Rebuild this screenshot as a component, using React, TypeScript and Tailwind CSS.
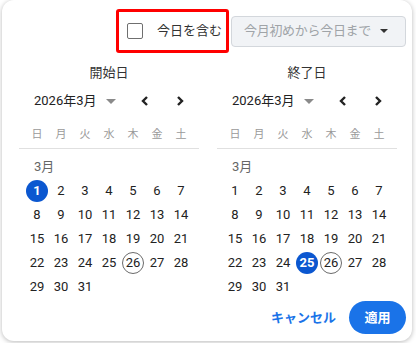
const WEEKDAYS = ["日", "月", "火", "水", "木", "金", "土"];
const TODAY = 26;

function Chevron({ dir }: { dir: "left" | "right" }) {
  return (
    <svg width="10" height="12" viewBox="0 0 10 12" fill="none">
      <path
        d={dir === "left" ? "M7 2 L3 6 L7 10" : "M3 2 L7 6 L3 10"}
        stroke="#222"
        strokeWidth="2.4"
        strokeLinejoin="miter"
      />
    </svg>
  );
}

function Calendar({ title, selected }: { title: string; selected: number }) {
  const days = Array.from({ length: 31 }, (_, i) => i + 1);

  return (
    <div className="w-[180px] flex flex-col">
      <div className="h-[20px] flex items-center justify-center text-[13px] text-[#333]">
        {title}
      </div>
      <div className="mt-[4px] h-[28px] flex items-center pl-[15px] pr-[5px]">
        <div className="flex-1 flex items-center whitespace-nowrap">
          <span className="text-[13px] text-[#222]">2026年3月</span>
          <svg className="ml-[9px]" width="10" height="5" viewBox="0 0 10 5">
            <path d="M0 0 L10 0 L5 5 Z" fill="#8a8a8a" />
          </svg>
        </div>
        <div className="flex gap-[7px]">
          <button className="w-[28px] h-[28px] flex items-center justify-center">
            <Chevron dir="left" />
          </button>
          <button className="w-[28px] h-[28px] flex items-center justify-center">
            <Chevron dir="right" />
          </button>
        </div>
      </div>
      <div className="mt-[9px] h-[25px] grid grid-cols-7 px-[6px] border-b border-[#e0e0e0]">
        {WEEKDAYS.map((w) => (
          <div key={w} className="flex items-center justify-center text-[11px] text-[#9a9a9a] pb-[2px]">
            {w}
          </div>
        ))}
      </div>
      <div className="mt-[6px] h-[24px] flex items-center pl-[15px] text-[13px] text-[#666]">
        3月
      </div>
      <div className="grid grid-cols-7 px-[6px]">
        {days.map((d) => (
          <div key={d} className="h-[24px] flex items-center justify-center">
            {d === selected ? (
              <span className="w-[22px] h-[22px] rounded-full bg-[#0b57d0] text-white font-bold text-[13px] flex items-center justify-center">
                {d}
              </span>
            ) : d === TODAY ? (
              <span className="w-[22px] h-[22px] rounded-full border border-[#6b6b6b] text-[#222] text-[13px] flex items-center justify-center">
                {d}
              </span>
            ) : (
              <span className="text-[13px] text-[#222]">{d}</span>
            )}
          </div>
        ))}
      </div>
    </div>
  );
}

export default function App() {
  return (
    <div
      className="w-[416px] h-[343px] bg-white pl-[2px] overflow-hidden"
      style={{ fontFamily: "Roboto, 'Noto Sans CJK JP', sans-serif" }}
    >
      <div className="w-[410px] h-[341px] rounded-[12px] bg-white shadow-[0_1px_5px_rgba(0,0,0,0.28)] flex flex-col pt-[9px] pr-[6px]">
        {/* top controls */}
        <div className="flex items-center justify-end gap-[2px] whitespace-nowrap">
          <label className="h-[44px] w-[113px] border-[3px] border-[#ff0000] rounded-[3px] flex items-center pl-[8px]">
            <span className="w-[16px] h-[16px] shrink-0 border-[1.5px] border-[#6f6f6f] rounded-[2px]" />
            <span className="ml-[14px] text-[13px] text-[#333]">今日を含む</span>
          </label>
          <div className="w-[175px] h-[31px] rounded-[4px] border border-[#d3d7dc] bg-[#f1f3f6] flex items-center pl-[12px] pr-[17px]">
            <span className="flex-1 text-[13px] tracking-[-0.3px] text-[#a0a4a8]">今月初めから今日まで</span>
            <svg width="8" height="4" viewBox="0 0 8 4">
              <path d="M0 0 L8 0 L4 4 Z" fill="#333" />
            </svg>
          </div>
        </div>

        {/* calendars */}
        <div className="mt-[10px] pl-[17px] flex gap-[18px]">
          <Calendar title="開始日" selected={1} />
          <Calendar title="終了日" selected={25} />
        </div>

        {/* footer */}
        <div className="mt-[2px] flex items-center justify-end gap-[13px]">
          <button className="text-[13px] font-bold text-[#1a73e8]">キャンセル</button>
          <button className="w-[57px] h-[33px] rounded-full bg-[#1a73e8] text-white text-[13px] font-bold">
            適用
          </button>
        </div>
      </div>
    </div>
  );
}
